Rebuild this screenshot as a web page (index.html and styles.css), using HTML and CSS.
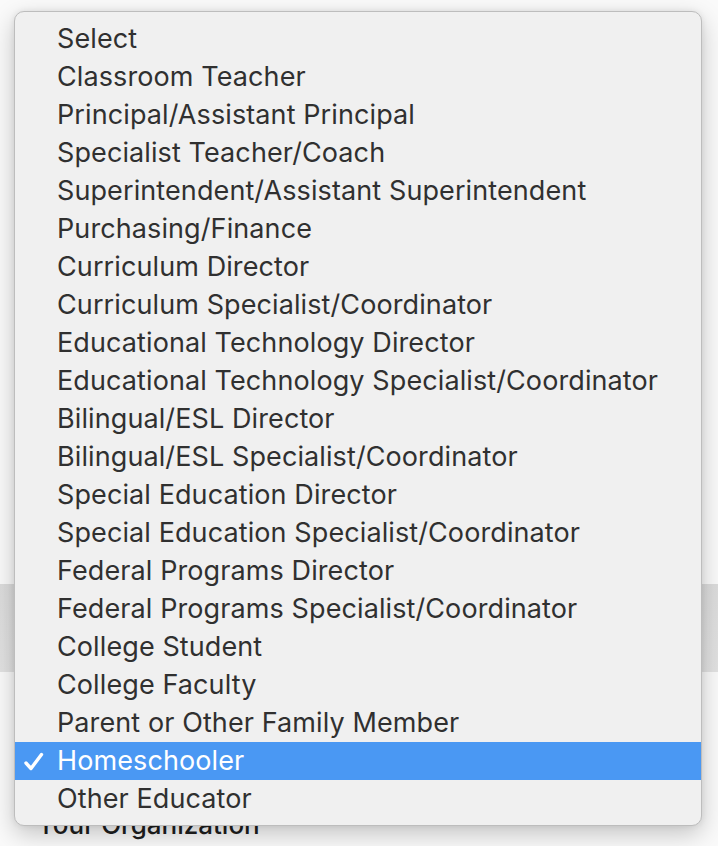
FILE: index.html
```html
<!DOCTYPE html>
<html>
<head>
<meta charset="utf-8">
<link rel="stylesheet" href="styles.css">
</head>
<body>
<div class="page">
  <div class="field"></div>
  <div class="label">Your Organization</div>
</div>
<div class="menu">
  <div class="item">Select</div>
  <div class="item">Classroom Teacher</div>
  <div class="item">Principal/Assistant Principal</div>
  <div class="item">Specialist Teacher/Coach</div>
  <div class="item">Superintendent/Assistant Superintendent</div>
  <div class="item">Purchasing/Finance</div>
  <div class="item">Curriculum Director</div>
  <div class="item">Curriculum Specialist/Coordinator</div>
  <div class="item">Educational Technology Director</div>
  <div class="item">Educational Technology Specialist/Coordinator</div>
  <div class="item">Bilingual/ESL Director</div>
  <div class="item">Bilingual/ESL Specialist/Coordinator</div>
  <div class="item">Special Education Director</div>
  <div class="item">Special Education Specialist/Coordinator</div>
  <div class="item">Federal Programs Director</div>
  <div class="item">Federal Programs Specialist/Coordinator</div>
  <div class="item">College Student</div>
  <div class="item">College Faculty</div>
  <div class="item">Parent or Other Family Member</div>
  <div class="item selected"><svg class="check" width="20" height="20" viewBox="0 0 20 20"><path d="M2 11 L7 16.5 L17.5 2.5" fill="none" stroke="#fff" stroke-width="3.4" stroke-linecap="round" stroke-linejoin="round"/></svg>Homeschooler</div>
  <div class="item">Other Educator</div>
</div>
</body>
</html>
```
FILE: styles.css
```css
html, body {
  margin: 0;
  padding: 0;
}
body {
  width: 718px;
  height: 846px;
  background: #fafafa;
  font-family: Inter, Roboto, "Liberation Sans", sans-serif;
  overflow: hidden;
  position: relative;
}
.page {
  padding-top: 584px;
}
.field {
  height: 88px;
  background: linear-gradient(#dcdcdc, #e2e2e2);
}
.label {
  margin-top: 137px;
  padding-left: 37px;
  font-size: 26px;
  font-weight: 500;
  color: #1e1e1e;
}
.menu {
  position: absolute;
  left: 14px;
  top: 11px;
  width: 686px;
  height: 805px;
  padding: 8px 0 0;
  box-sizing: content-box;
  background: #f0f0f0;
  border: 1px solid #bdbdbd;
  border-radius: 10px;
  box-shadow: 0 8px 24px rgba(0,0,0,0.22), 0 0 6px rgba(0,0,0,0.08);
}
.item {
  height: 38px;
  line-height: 38px;
  padding-left: 42px;
  font-size: 27px;
  letter-spacing: 0.1px;
  color: #303030;
  white-space: nowrap;
  position: relative;
}
.item.selected {
  background: #4a98f3;
  color: #fff;
}
.check {
  position: absolute;
  left: 9px;
  top: 10px;
}
```
